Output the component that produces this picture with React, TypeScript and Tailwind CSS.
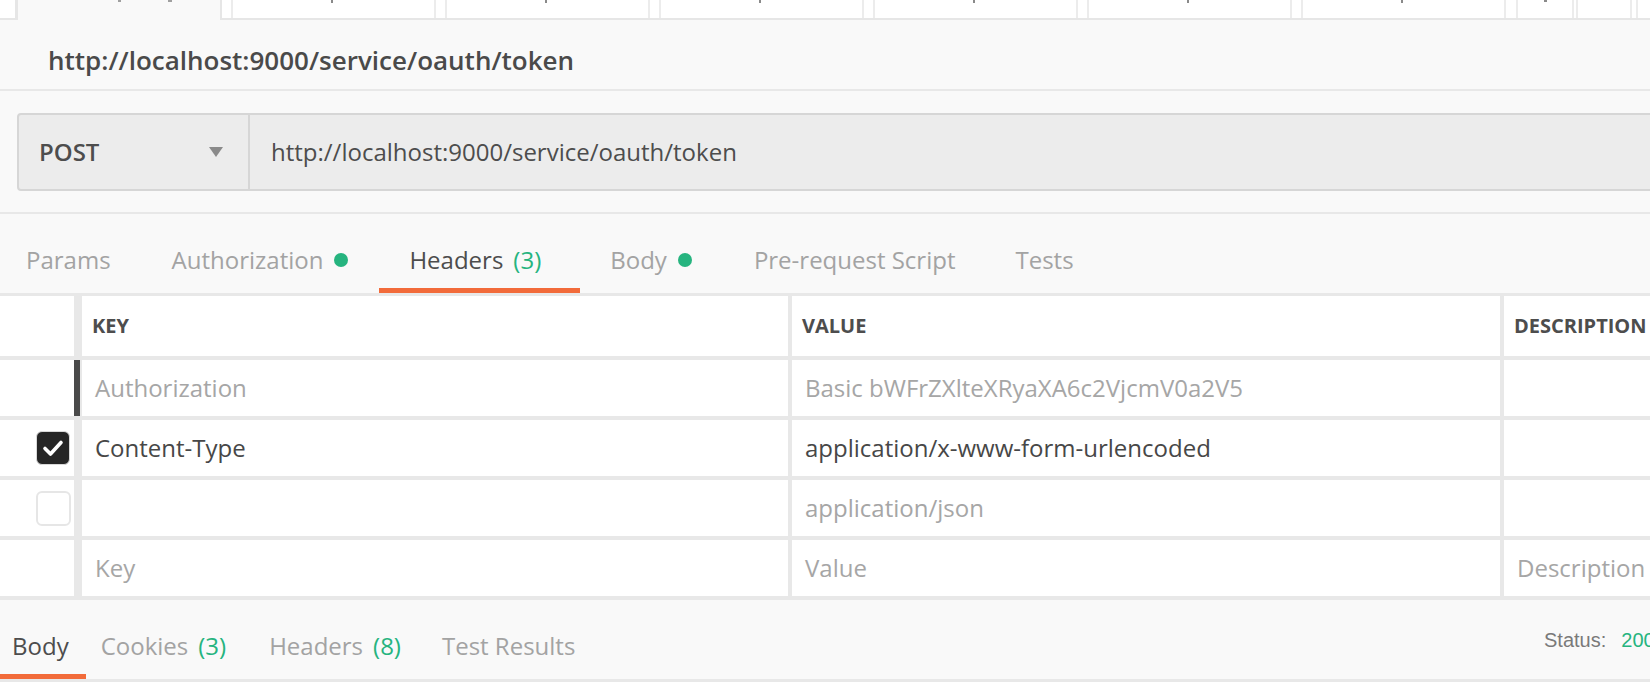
import React from 'react';

type HeaderRow = {
    check: 'none' | 'on' | 'off';
    key: string;
    value: string;
    desc?: string;
    keyMuted?: boolean;
    valueMuted?: boolean;
    handle?: boolean;
};

const rows: HeaderRow[] = [
    { check: 'none', key: 'Authorization', value: 'Basic bWFrZXlteXRyaXA6c2VjcmV0a2V5', keyMuted: true, valueMuted: true, handle: true },
    { check: 'on', key: 'Content-Type', value: 'application/x-www-form-urlencoded' },
    { check: 'off', key: '', value: 'application/json', valueMuted: true },
    { check: 'none', key: 'Key', value: 'Value', desc: 'Description', keyMuted: true, valueMuted: true },
];

function GreenDot() {
    return <span className="ml-[11px] inline-block w-[14px] h-[14px] rounded-full bg-[#26b47f]" />;
}

function Count(props: { n: number }) {
    return <span className="ml-[10px] text-[#26b47f]">({props.n})</span>;
}

function Checkbox(props: { state: 'none' | 'on' | 'off' }) {
    if (props.state === 'on') {
        return (
            <div className="w-[34px] h-[34px] rounded-[6px] bg-[#262626] border border-[#d9d9d9] flex items-center justify-center">
                <svg width="22" height="18" viewBox="0 0 22 18">
                    <polyline points="3,9.5 8.5,15 19,3.5" fill="none" stroke="#ffffff" strokeWidth="3.6" strokeLinecap="round" strokeLinejoin="round" />
                </svg>
            </div>
        );
    }
    if (props.state === 'off') {
        return <div className="w-[35px] h-[35px] rounded-[6px] border-2 border-[#e6e6e6] bg-white" />;
    }
    return null;
}

function TopStrip() {
    const tabs = [0, 1, 2, 3, 4, 5];
    return (
        <div className="flex items-start h-[20px] bg-white border-b-2 border-[#e6e6e6]">
            <div className="w-[16px] h-[18px] border-r border-[#e6e6e6]" />
            <div className="w-[206px] h-[20px] -mb-[2px] bg-[#f9f9f9] border-x-2 border-[#e6e6e6] flex items-start">
                <div className="ml-[100px] w-[3px] h-[2px] bg-[#a0a0a0]" />
                <div className="ml-[47px] w-[4px] h-[2px] bg-[#a0a0a0]" />
            </div>
            {tabs.map((t) => (
                <div key={t} className="ml-[9px] w-[205px] h-[18px] border-x-2 border-[#ececec] flex items-start">
                    <div className="ml-[98px] w-[2px] h-[3px] bg-[#8a8a8a]" />
                </div>
            ))}
            <div className="ml-[10px] w-[58px] h-[18px] border-x-2 border-[#ececec] flex items-start">
                <div className="ml-[26px] w-[3px] h-[2px] bg-[#8a8a8a]" />
            </div>
            <div className="ml-[2px] w-[56px] h-[18px] border-x-2 border-[#ececec]" />
            <div className="ml-[4px] w-[40px] h-[18px] border-l-2 border-[#ececec]" />
        </div>
    );
}

function RequestTabs() {
    return (
        <div className="flex h-[79px] border-b-[3px] border-[#e8e8e8] box-content text-[24px] leading-[32px] text-[#a3a3a3]">
            <div className="pl-[26px] pr-[31px] pt-[30px]">Params</div>
            <div className="pl-[30px] pr-[31px] pt-[30px] flex items-start">
                <span>Authorization</span>
                <span className="h-[32px] flex items-center"><GreenDot /></span>
            </div>
            <div className="pl-[30px] pr-[39px] pt-[30px] border-b-[5px] border-[#f26b3a] text-[#4d4d4d] flex items-start">
                <span>Headers</span>
                <Count n={3} />
            </div>
            <div className="pl-[30px] pr-[32px] pt-[30px] flex items-start">
                <span>Body</span>
                <span className="h-[32px] flex items-center"><GreenDot /></span>
            </div>
            <div className="px-[30px] pt-[30px]">Pre-request Script</div>
            <div className="px-[30px] pt-[30px]">Tests</div>
        </div>
    );
}

function HeadersTable() {
    return (
        <div className="flex flex-col gap-[4px] pb-[4px] bg-[#e8e8e8]">
            <div className="flex h-[60px] text-[20px] leading-[28px] font-bold text-[#4d4d4d]">
                <div className="w-[74px] shrink-0 bg-white" />
                <div className="w-[8px] shrink-0" />
                <div className="w-[706px] shrink-0 bg-white flex items-center pl-[10px]">KEY</div>
                <div className="ml-[4px] w-[708px] shrink-0 bg-white flex items-center pl-[10px]">VALUE</div>
                <div className="ml-[4px] w-[300px] shrink-0 bg-white flex items-center pl-[10px]">DESCRIPTION</div>
            </div>
            {rows.map((r, i) => (
                <div key={i} className="flex h-[56px] text-[24px] leading-[32px]">
                    <div className="w-[74px] shrink-0 bg-white flex items-center pl-[36px]">
                        <Checkbox state={r.check} />
                    </div>
                    <div className="w-[8px] shrink-0 flex">
                        {r.handle ? <div className="w-[6px] bg-[#4a4a4a]" /> : null}
                    </div>
                    <div className={`w-[706px] shrink-0 bg-white flex items-center pl-[13px] ${r.keyMuted ? 'text-[#a6a6a6]' : 'text-[#474747]'}`}>
                        {r.key}
                    </div>
                    <div className={`ml-[4px] w-[708px] shrink-0 bg-white flex items-center pl-[13px] ${r.valueMuted ? 'text-[#a6a6a6]' : 'text-[#474747]'}`}>
                        {r.value}
                    </div>
                    <div className="ml-[4px] w-[300px] shrink-0 bg-white flex items-center pl-[13px] text-[#a6a6a6]">
                        {r.desc ?? ''}
                    </div>
                </div>
            ))}
        </div>
    );
}

function ResponseBar() {
    return (
        <div className="flex h-[82px] border-b-[3px] border-[#e8e8e8] text-[24px] leading-[32px] text-[#a3a3a3]">
            <div className="w-[1544px] shrink-0 flex">
                <div className="pl-[12px] pr-[17px] pt-[30px] border-b-[5px] border-[#f26b3a] text-[#4d4d4d] h-[79px]">Body</div>
                <div className="ml-[15px] pt-[30px] flex items-start">
                    <span>Cookies</span>
                    <Count n={3} />
                </div>
                <div className="ml-[43px] pt-[30px] flex items-start">
                    <span>Headers</span>
                    <Count n={8} />
                </div>
                <div className="ml-[41px] pt-[30px]">Test Results</div>
            </div>
            <div className="pt-[28px] font-['Liberation_Sans',Arial,sans-serif] text-[20px] leading-[24px] whitespace-nowrap text-[#7a7a7a]">
                Status:<span className="ml-[15px] text-[#26b47f]">200 OK</span>
            </div>
        </div>
    );
}

export default function App() {
    return (
        <div className="w-[1650px] h-[682px] overflow-hidden bg-[#f9f9f9] font-['Open_Sans',sans-serif]">
            <div className="w-[1900px]">
                <TopStrip />
                <div className="h-[71px] border-b-2 border-[#e8e8e8] pt-[22px] pl-[48px] text-[26px] leading-[36px] font-semibold text-[#4a4a4a]">
                    http://localhost:9000/service/oauth/token
                </div>
                <div className="pt-[22px] pb-[21px] border-b-2 border-[#e8e8e8]">
                    <div className="ml-[17px] h-[78px] flex bg-[#ececec] border-2 border-[#d6d6d6] rounded-[4px]">
                        <div className="w-[231px] shrink-0 border-r-2 border-[#d6d6d6] flex items-center pl-[20px] pr-[25px] text-[24px] leading-[32px] font-semibold text-[#4d4d4d]">
                            <span className="flex-1">POST</span>
                            <svg width="14" height="10" viewBox="0 0 14 10">
                                <polygon points="0,0 14,0 7,10" fill="#8a8a8a" />
                            </svg>
                        </div>
                        <div className="flex items-center pl-[21px] text-[24px] leading-[32px] text-[#4d4d4d]">
                            http://localhost:9000/service/oauth/token
                        </div>
                    </div>
                </div>
                <RequestTabs />
                <HeadersTable />
                <ResponseBar />
            </div>
        </div>
    );
}
